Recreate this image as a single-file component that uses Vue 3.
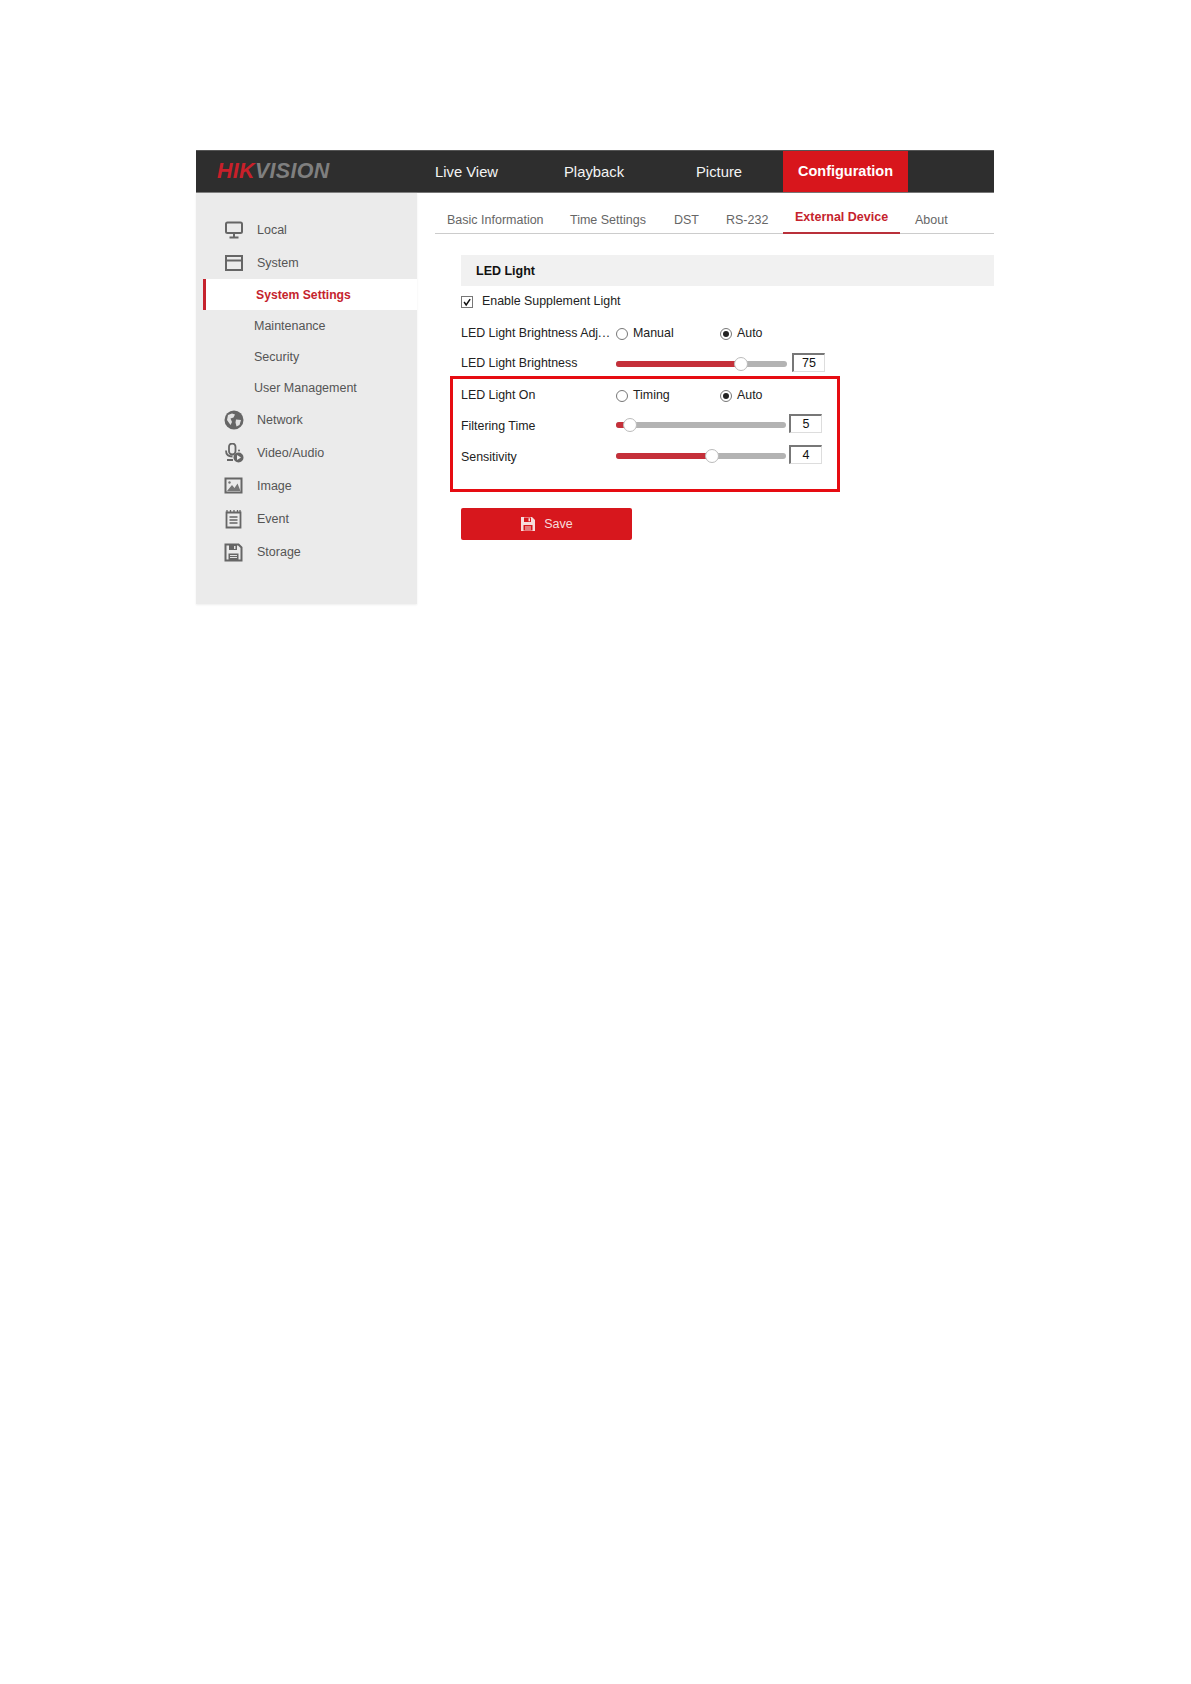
<script setup>
const navItems = [
  { label: 'Live View', width: 129 },
  { label: 'Playback', width: 132 },
  { label: 'Picture', width: 102 },
]
const tabs = [
  { label: 'Basic Information', width: 123 },
  { label: 'Time Settings', width: 104 },
  { label: 'DST', width: 52 },
  { label: 'RS-232', width: 69 },
  { label: 'External Device', width: 117, active: true },
  { label: 'About', width: 60 },
]
const subItems = [
  { label: 'System Settings', active: true },
  { label: 'Maintenance' },
  { label: 'Security' },
  { label: 'User Management' },
]
</script>

<template>
  <div class="page">
    <div class="frame">
      <header class="topbar">
        <div class="logo"><span class="logo-red">HIK</span><span class="logo-grey">VISION</span></div>
        <nav class="nav">
          <span v-for="n in navItems" :key="n.label" class="nav-item" :style="{ width: n.width + 'px' }">{{ n.label }}</span>
          <span class="nav-active">Configuration</span>
        </nav>
      </header>

      <div class="body">
        <aside class="side">
          <div class="side-row">
            <svg class="ico" viewBox="0 0 20 20"><rect x="2" y="2.5" width="16" height="10.5" rx="1.5" fill="none" stroke="#666" stroke-width="2"/><path d="M10 13v4M5.5 17.5h9" stroke="#666" stroke-width="2" fill="none"/></svg>
            <span>Local</span>
          </div>
          <div class="side-row">
            <svg class="ico" viewBox="0 0 20 20"><rect x="2" y="3" width="16" height="14" fill="none" stroke="#666" stroke-width="2"/><path d="M2 7.500h16" stroke="#666" stroke-width="2"/></svg>
            <span>System</span>
          </div>
          <div v-for="s in subItems" :key="s.label" class="sub-row" :class="{ 'sub-active': s.active }">{{ s.label }}</div>
          <div class="side-row">
            <svg class="ico" viewBox="0 0 20 20"><circle cx="10" cy="10" r="9.500" fill="#666"/><path d="M4 5l4-1.500 3 1-1.500 3-3 1 1.500 3.500-1.500 3L3 10zM12 9.500l5 .5-1.500 5-3 1.500-1-4z" fill="#e2e2e2"/></svg>
            <span>Network</span>
          </div>
          <div class="side-row">
            <svg class="ico" viewBox="0 0 20 20"><rect x="5" y="0.500" width="6.500" height="11" rx="3.250" fill="none" stroke="#666" stroke-width="1.800"/><path d="M2 7.500c0 4 2.500 6 6.500 6M3 17h6" fill="none" stroke="#666" stroke-width="1.800"/><circle cx="14.500" cy="14.500" r="5" fill="#666"/><path d="M13 12l4 2.500-4 2.500z" fill="#eee"/><circle cx="15" cy="7.500" r="1" fill="#666"/></svg>
            <span>Video/Audio</span>
          </div>
          <div class="side-row">
            <svg class="ico" viewBox="0 0 20 20"><rect x="1.500" y="2.500" width="16" height="14" fill="none" stroke="#666" stroke-width="2"/><path d="M3 15l5-6 2.500 3 3-4.500 3 7.500z" fill="#777"/><circle cx="5.500" cy="6.500" r="1.200" fill="#777"/></svg>
            <span>Image</span>
          </div>
          <div class="side-row">
            <svg class="ico" viewBox="0 0 20 20"><path d="M2.500 3.500h14v15h-14z" fill="none" stroke="#666" stroke-width="1.800"/><path d="M3 1v3M6.500 1v3M10 1v3M13.500 1v3M16 1v3" stroke="#666" stroke-width="1.300"/><path d="M5.500 8h8M5.500 11h8M5.500 14h8" stroke="#666" stroke-width="1.300"/></svg>
            <span>Event</span>
          </div>
          <div class="side-row">
            <svg class="ico" viewBox="0 0 20 20"><path d="M1.500 2.500h13l3 3v13h-16z" fill="none" stroke="#666" stroke-width="2"/><path d="M5 3h8v5H5zM4.500 11.500h10V18h-10z" fill="#666"/><path d="M6 13.500h7M6 15.500h7" stroke="#e2e2e2"/><path d="M10 4h1.500v3H10z" fill="#e2e2e2"/></svg>
            <span>Storage</span>
          </div>
        </aside>

        <main class="main">
          <div class="tabs">
            <span v-for="t in tabs" :key="t.label" class="tab" :class="{ 'tab-active': t.active }" :style="{ width: t.width + 'px' }">{{ t.label }}</span>
          </div>

          <section class="form">
            <h2 class="section-title">LED Light</h2>
            <label class="check-row">
              <span class="check"><svg viewBox="0 0 12 12"><path d="M2.500 6l2.500 3.500L9.800 2.500" fill="none" stroke="#111" stroke-width="1.800"/></svg></span>
              Enable Supplement Light
            </label>

            <div class="row row-adj">
              <span class="label">LED Light Brightness Adj<span class="dots">...</span></span>
              <div class="radios">
                <span class="radio-item"><i class="radio"></i>Manual</span>
                <span class="radio-item"><i class="radio on"></i>Auto</span>
              </div>
            </div>
            <div class="row row-bright">
              <span class="label">LED Light Brightness</span>
              <div class="slider s-long"><span class="fill" style="width: 125px"></span><span class="knob" style="left: 118px"></span></div>
              <span class="value v-wide">75</span>
            </div>

            <div class="highlight">
              <div class="row row-on">
                <span class="label">LED Light On</span>
                <div class="radios">
                  <span class="radio-item"><i class="radio"></i>Timing</span>
                  <span class="radio-item"><i class="radio on"></i>Auto</span>
                </div>
              </div>
              <div class="row row-filter">
                <span class="label">Filtering Time</span>
                <div class="slider"><span class="fill" style="width: 14px"></span><span class="knob" style="left: 7px"></span></div>
                <span class="value">5</span>
              </div>
              <div class="row row-sens">
                <span class="label">Sensitivity</span>
                <div class="slider"><span class="fill" style="width: 96px"></span><span class="knob" style="left: 89px"></span></div>
                <span class="value">4</span>
              </div>
            </div>

            <button class="save">
              <svg viewBox="0 0 16 16" width="16" height="16"><path d="M1 1h11l3 3v11H1z" fill="#f6dcdc"/><path d="M4 1.500h7V6H4z" fill="#d7171d"/><path d="M8.500 2.300h1.500v3H8.500z" fill="#f6dcdc"/><path d="M3.500 9h9v5.500h-9z" fill="#d7171d"/><path d="M5 11h6M5 13h6" stroke="#f6dcdc"/></svg>
              Save
            </button>
          </section>
        </main>
      </div>
    </div>
  </div>
</template>

<style scoped>
.page {
  padding: 150px 0 0 196px;
  font-family: "Liberation Sans", Arial, sans-serif;
  height: 1534px;
  overflow: hidden;
  background: #fff;
}
.frame { width: 798px; }
.topbar {
  height: 43px;
  background: #2e2e2e;
  border-top: 1px solid #555;
  border-bottom: 1px solid #777;
  box-sizing: border-box;
  display: flex;
  align-items: center;
}
.logo {
  width: 239px;
  padding-left: 21px;
  box-sizing: border-box;
  font-style: italic;
  font-weight: 700;
  font-size: 21.500px;
  letter-spacing: 0.300px;
}
.logo-red { color: #c8202a; }
.logo-grey { color: #7f7f7f; }
.nav { display: flex; align-items: center; height: 41px; }
.nav-item { color: #f4f4f4; font-size: 14.800px; }
.nav-active {
  width: 125px;
  height: 41px;
  line-height: 41px;
  margin-left: -15px;
  background: #d8161c;
  color: #fff;
  font-size: 14.500px;
  font-weight: 700;
  text-align: center;
}
.body { display: flex; }
.side {
  width: 221px;
  height: 411px;
  background: #ebebeb;
  padding-top: 20px;
  box-sizing: border-box;
  box-shadow: 0 1px 2px #eee;
  flex: none;
}
.side-row {
  height: 33px;
  display: flex;
  align-items: center;
  padding-left: 28px;
  color: #555;
  font-size: 12.500px;
}
.ico { width: 20px; height: 20px; margin-right: 13px; flex: none; }
.sub-row {
  height: 31px;
  line-height: 32px;
  padding-left: 58px;
  color: #555;
  font-size: 12.500px;
}
.sub-active {
  background: #fff;
  border-left: 3px solid #c5232d;
  margin-left: 7px;
  padding-left: 50px;
  line-height: 33px;
  color: #c5232d;
  font-size: 12.200px;
  font-weight: 700;
}
.main { flex: 1; min-width: 0; }
.tabs {
  margin: 0 0 0 18px;
  height: 41px;
  border-bottom: 1px solid #ccc;
  box-sizing: border-box;
  display: flex;
  align-items: flex-end;
}
.tab {
  height: 29px;
  line-height: 27px;
  padding: 3px 0 0 12px;
  box-sizing: border-box;
  color: #666;
  font-size: 12.500px;
  white-space: nowrap;
}
.tab:last-child { padding-left: 15px; }
.tab-active {
  height: 32px;
  line-height: 25px;
  color: #c5232d;
  font-weight: 700;
  border-bottom: 2px solid #b9303a;
  margin-bottom: -1px;
}
.form { padding: 21px 0 0 44px; color: #222; font-size: 12.400px; }
.section-title {
  margin: 0;
  height: 31px;
  line-height: 33px;
  background: #f1f1f1;
  padding-left: 15px;
  font-size: 12.500px;
  color: #111;
}
.check-row {
  display: flex;
  align-items: center;
  gap: 9px;
  height: 31px;
  padding-bottom: 2px;
  box-sizing: border-box;
}
.check {
  width: 12px;
  height: 12px;
  border: 1px solid #777;
  box-sizing: border-box;
  display: block;
  margin-top: 2px;
  flex: none;
}
.check svg { display: block; width: 10px; height: 10px; }
.row { display: flex; align-items: center; }
.row-adj { height: 32px; }
.row-bright { height: 28px; }
.row-on { height: 31px; }
.row-filter { height: 30px; }
.row-sens { height: 32px; }
.row-filter .label,
.row-sens .label { padding-top: 2px; }
.row-filter .value,
.row-sens .value { margin-top: -4px; }
.row-bright .slider { margin-top: 2px; }
.label { width: 155px; flex: none; white-space: nowrap; }
.dots { letter-spacing: 0.700px; }
.radios { display: flex; }
.radio-item { width: 104px; display: flex; align-items: center; gap: 5px; }
.radio {
  width: 12px;
  height: 12px;
  border: 1px solid #777;
  border-radius: 50%;
  box-sizing: border-box;
  margin-top: 2px;
  background: #fff;
  flex: none;
  display: block;
  position: relative;
}
.radio.on::after {
  content: "";
  position: absolute;
  left: 2px;
  top: 2px;
  width: 6px;
  height: 6px;
  border-radius: 50%;
  background: #222;
}
.slider {
  width: 170px;
  height: 6px;
  border-radius: 3px;
  background: #b3b3b3;
  position: relative;
  flex: none;
}
.s-long { width: 171px; }
.fill {
  position: absolute;
  left: 0;
  top: 0;
  height: 6px;
  border-radius: 3px;
  background: #c5303a;
}
.knob {
  position: absolute;
  top: -4px;
  width: 14px;
  height: 14px;
  border-radius: 50%;
  border: 1px solid #bbb;
  box-sizing: border-box;
  background: #fff;
}
.value {
  margin-left: 3px;
  width: 33px;
  height: 19px;
  line-height: 17px;
  box-sizing: border-box;
  border: 1px solid #ddd;
  border-top: 2px solid #777;
  border-left: 2px solid #777;
  text-align: center;
  font-size: 12.500px;
  margin-top: -2px;
  color: #111;
}
.v-wide { margin-left: 5px; }
.highlight {
  margin: -1px 154px 0 -11px;
  padding: 0 0 18px 8px;
  height: 116px;
  width: 390px;
  box-sizing: border-box;
  border: 3px solid #e60c12;
}
.save {
  margin-top: 16px;
  display: flex;
  align-items: center;
  justify-content: center;
  gap: 8px;
  width: 171px;
  height: 32px;
  border: 0;
  border-radius: 2px;
  background: #d7171d;
  color: #f6dcdc;
  font: 12.500px "Liberation Sans", Arial, sans-serif;
  padding: 0;
}
</style>
